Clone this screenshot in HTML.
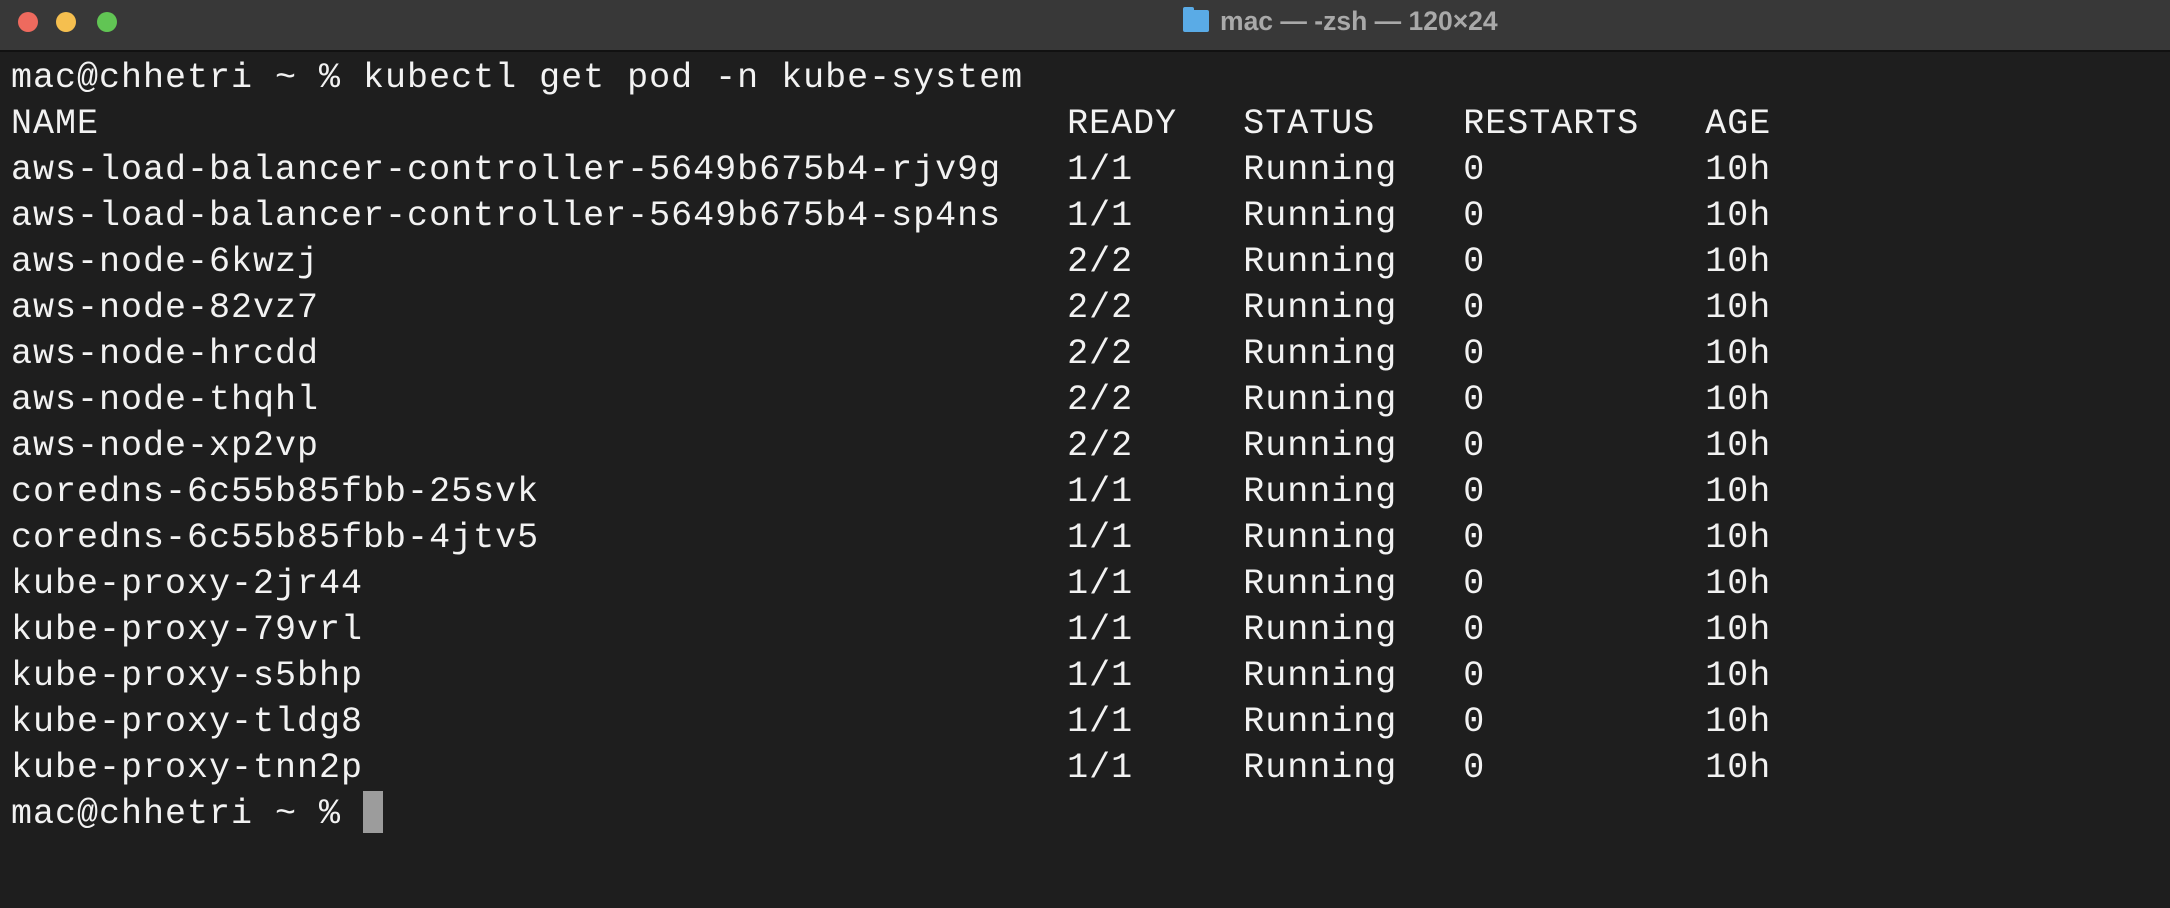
<!DOCTYPE html>
<html><head><meta charset="utf-8"><style>
html,body{margin:0;padding:0;width:2170px;height:908px;overflow:hidden;background:#1e1e1e;}
.tb{position:absolute;left:0;top:0;width:2170px;height:50px;background:#383838;border-bottom:2px solid #111;}
.dot{position:absolute;top:12px;width:20px;height:20px;border-radius:50%;}
.title{position:absolute;top:6px;left:1220px;font-family:"Liberation Sans",sans-serif;font-weight:bold;font-size:26.5px;color:#a9a9a9;}
.folder{position:absolute;left:1183px;top:10px;width:26px;height:22px;background:#5aabe6;border-radius:2px;}
.folder:before{content:"";position:absolute;left:0;top:-3px;width:11px;height:5px;background:#5aabe6;border-radius:2px 2px 0 0;}
pre{position:absolute;left:11px;top:55px;margin:0;font-family:"Liberation Mono",monospace;font-size:35px;letter-spacing:1px;line-height:46px;color:#f2f2f2;}
.cur{display:inline-block;width:20px;height:42px;background:#9c9c9c;vertical-align:-10px;}
</style></head><body>
<div class="tb">
<div class="dot" style="left:18px;background:#ee6a5e"></div>
<div class="dot" style="left:56px;background:#f5bf4f"></div>
<div class="dot" style="left:97px;background:#61c554"></div>
<div class="folder"></div>
<div class="title">mac — -zsh — 120×24</div>
</div>
<pre>mac@chhetri ~ % kubectl get pod -n kube-system
NAME                                            READY   STATUS    RESTARTS   AGE
aws-load-balancer-controller-5649b675b4-rjv9g   1/1     Running   0          10h
aws-load-balancer-controller-5649b675b4-sp4ns   1/1     Running   0          10h
aws-node-6kwzj                                  2/2     Running   0          10h
aws-node-82vz7                                  2/2     Running   0          10h
aws-node-hrcdd                                  2/2     Running   0          10h
aws-node-thqhl                                  2/2     Running   0          10h
aws-node-xp2vp                                  2/2     Running   0          10h
coredns-6c55b85fbb-25svk                        1/1     Running   0          10h
coredns-6c55b85fbb-4jtv5                        1/1     Running   0          10h
kube-proxy-2jr44                                1/1     Running   0          10h
kube-proxy-79vrl                                1/1     Running   0          10h
kube-proxy-s5bhp                                1/1     Running   0          10h
kube-proxy-tldg8                                1/1     Running   0          10h
kube-proxy-tnn2p                                1/1     Running   0          10h
mac@chhetri ~ % <span class="cur"></span></pre>
</body></html>
